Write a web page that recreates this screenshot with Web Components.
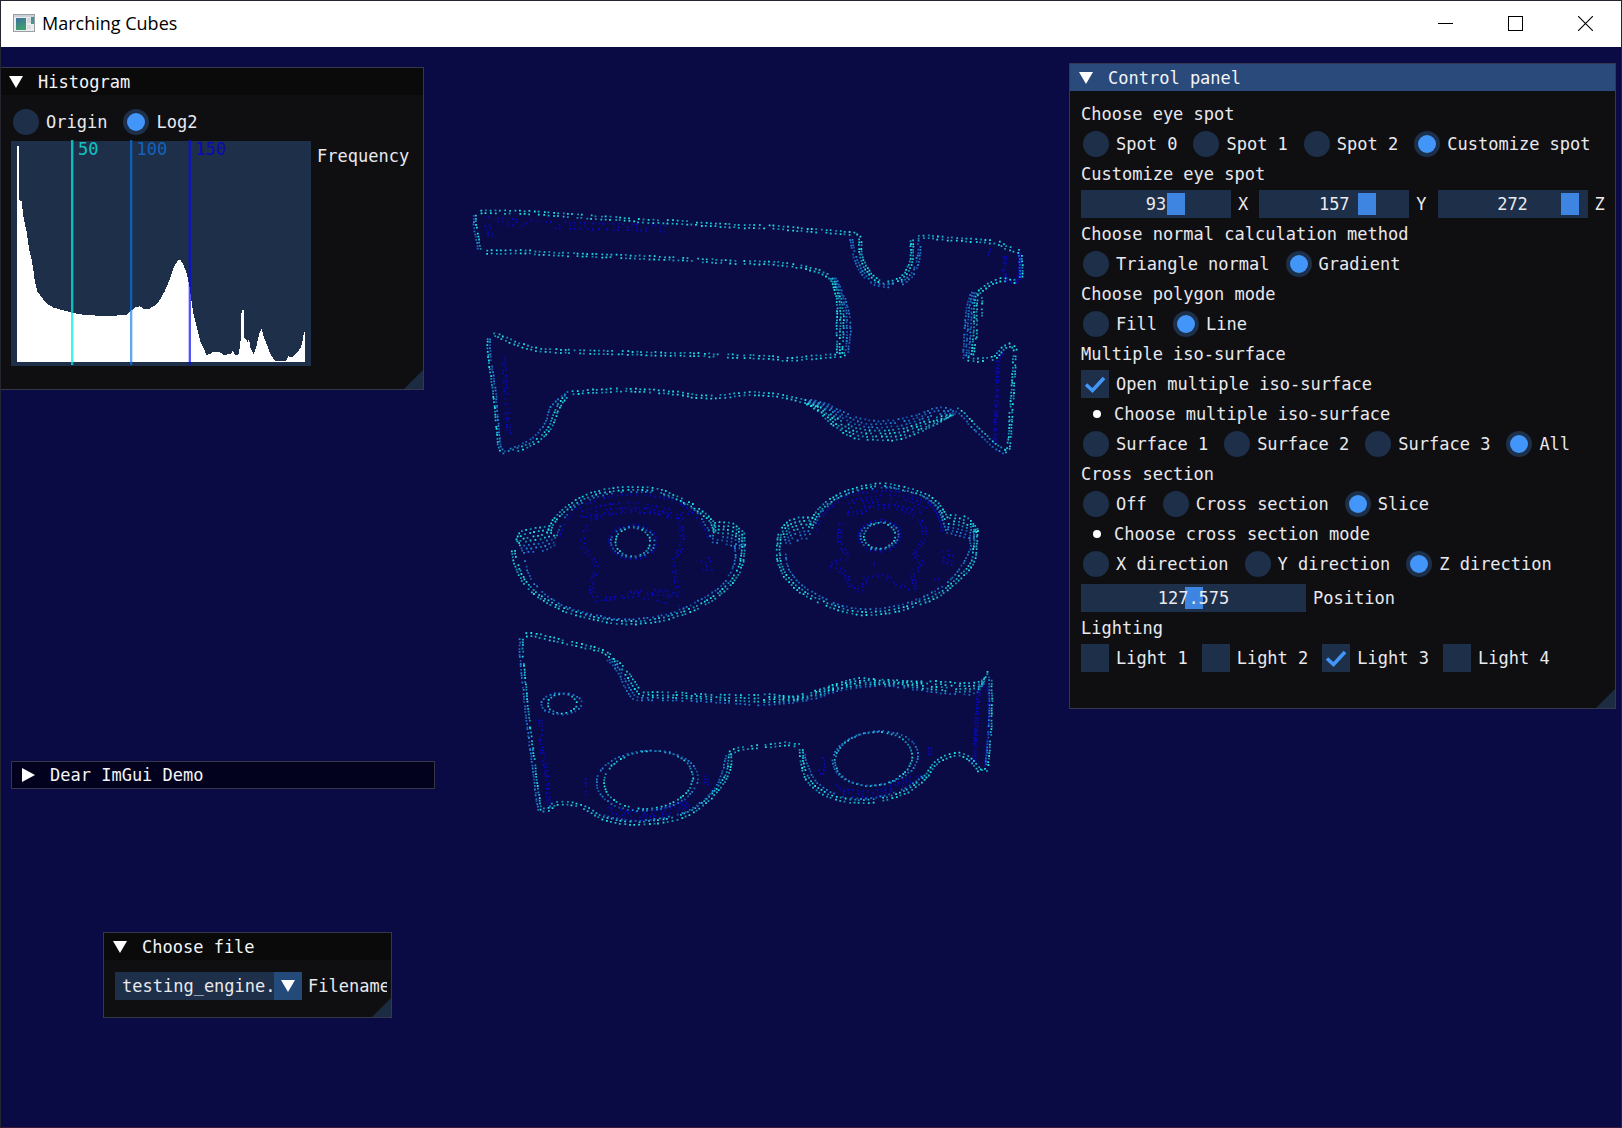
<!DOCTYPE html>
<html lang="en">
<head>
<meta charset="utf-8">
<title>Marching Cubes</title>
<style>
html, body { height: 100%; margin: 0; }
body { background: #0a0a44; overflow: hidden; }
</style>
</head>
<body>
<app-frame caption="Marching Cubes">
  <point-cloud></point-cloud>
  <im-window caption="Histogram" class="histogram">
    <im-choices kind="radio" name="scale" options="Origin|Log2" checked="1"></im-choices>
    <im-histogram label="Frequency"></im-histogram>
  </im-window>
  <im-window caption="Dear ImGui Demo" class="demo" collapsed></im-window>
  <im-window caption="Choose file" class="file">
    <im-combo label="Filename" value="testing_engine."></im-combo>
  </im-window>
  <im-window caption="Control panel" class="control" active>
    <im-text>Choose eye spot</im-text>
    <im-choices kind="radio" name="spot" options="Spot 0|Spot 1|Spot 2|Customize spot" checked="3"></im-choices>
    <im-text>Customize eye spot</im-text>
    <im-row>
      <im-slider label="X" value="93" min="-300" max="300"></im-slider>
      <im-slider label="Y" value="157" min="-300" max="300"></im-slider>
      <im-slider label="Z" value="272" min="-300" max="300"></im-slider>
    </im-row>
    <im-text>Choose normal calculation method</im-text>
    <im-choices kind="radio" name="normal" options="Triangle normal|Gradient" checked="1"></im-choices>
    <im-text>Choose polygon mode</im-text>
    <im-choices kind="radio" name="polygon" options="Fill|Line" checked="1"></im-choices>
    <im-text>Multiple iso-surface</im-text>
    <im-choices kind="checkbox" name="multi" options="Open multiple iso-surface" checked="0"></im-choices>
    <im-text bullet>Choose multiple iso-surface</im-text>
    <im-choices kind="radio" name="surface" options="Surface 1|Surface 2|Surface 3|All" checked="3"></im-choices>
    <im-text>Cross section</im-text>
    <im-choices kind="radio" name="section" options="Off|Cross section|Slice" checked="2"></im-choices>
    <im-text bullet>Choose cross section mode</im-text>
    <im-choices kind="radio" name="direction" options="X direction|Y direction|Z direction" checked="2"></im-choices>
    <im-row spaced>
      <im-slider wide label="Position" value="127.575" min="0" max="255"></im-slider>
    </im-row>
    <im-text>Lighting</im-text>
    <im-choices kind="checkbox" name="light" options="Light 1|Light 2|Light 3|Light 4" checked="2"></im-choices>
  </im-window>
</app-frame>

<script>
function define(name, render) {
  customElements.define(name, class extends HTMLElement {
    connectedCallback() {
      if (this.shadowRoot) return;
      const root = this.attachShadow({ mode: 'open' });
      root.innerHTML = render(this);
    }
  });
}

define('app-frame', el => `
<style>
  :host { display: flex; flex-direction: column; height: 100vh; box-sizing: border-box;
    border: 1px solid #25252f; border-bottom-color: #3a1a3a; }
  header { display: flex; align-items: center; height: 46px; flex: none; background: #fff; color: #000;
    font: 18px/24px "Open Sans", "Noto Sans", sans-serif; }
  .icon { margin: 0 7px 2px 12px; }
  h1 { flex: 1; margin: 0; padding-bottom: 2px; font: inherit; }
  button { width: 70px; height: 46px; padding: 0 1px 2px 0; border: 0; background: none; display: grid; place-items: center; }
  svg { display: block; }
  main { flex: 1; position: relative; overflow: hidden; min-height: 0; background: #0a0a44;
    font: 17px/30px "DejaVu Sans Mono", "Liberation Mono", monospace; color: #e9e9ee; }
  ::slotted(im-window) { position: absolute; }
  ::slotted(.histogram) { left: -2px; top: 20px; width: 425px; height: 323px; --body-top: 12px; }
  ::slotted(.demo) { left: 10px; top: 714px; width: 424px; }
  ::slotted(.file) { left: 102px; top: 885px; width: 289px; height: 86px; --body-top: 12px; }
  ::slotted(.control) { right: 5px; top: 16px; width: 547px; padding-bottom: 35px; }
</style>
<header>
  <svg class="icon" width="22" height="18" viewBox="0 0 22 18">
    <defs><linearGradient id="g" x1="0" y1="0" x2="0.4" y2="1"><stop offset="0" stop-color="#3f6f9f"/><stop offset="1" stop-color="#3f9f6c"/></linearGradient></defs>
    <rect x=".5" y=".5" width="21" height="17" fill="#e9edee" stroke="#9aa0a4"/>
    <rect x="1" y="1" width="20" height="2" fill="#c9d2d8"/>
    <rect x="3" y="4" width="10" height="12" fill="url(#g)"/>
    <rect x="14" y="4" width="4" height="5" fill="#d4d9dc"/><rect x="14" y="11" width="4" height="4" fill="#d9dddf"/>
    <rect x="18" y="3" width="3" height="7" fill="#4d8f94"/>
  </svg>
  <h1>${el.getAttribute('caption')}</h1>
  <button aria-label="Minimize"><svg width="15" height="15"><path d="M0 7.5H15" stroke="#000"/></svg></button>
  <button aria-label="Maximize"><svg width="15" height="15"><rect x=".5" y=".5" width="14" height="14" fill="none" stroke="#000"/></svg></button>
  <button aria-label="Close"><svg width="15" height="15"><path d="M0 0L15 15M15 0L0 15" stroke="#000" stroke-width="1.1"/></svg></button>
</header>
<main><slot></slot></main>`);

define('im-window', el => {
  const closed = el.hasAttribute('collapsed');
  return `
<style>
  :host { display: flex; flex-direction: column; box-sizing: border-box; overflow: hidden;
    border: 1px solid #37374a; background: ${closed ? '#02021e' : '#0f0f12'}; }
  header { display: flex; align-items: center; gap: 15px; flex: none; height: ${closed ? 26 : 27}px; padding-left: 9px;
    background: ${closed ? '#02021e' : el.hasAttribute('active') ? '#294a7a' : '#0a0a0b'}; }
  h2 { margin: 0; font: inherit; line-height: 26px; color: #f4f4f6; }
  button { width: 14px; height: 26px; padding: 0; border: 0; background: none; display: grid; place-items: center; }
  .body { padding: var(--body-top, 8px) 4px 0 11px; display: flex; flex-direction: column; }
  .grip { position: absolute; right: 0; bottom: 0; display: block; }
</style>
<header>
  <button aria-label="Toggle window"><svg width="14" height="14"><path d="${closed ? 'M1 0L14 7L1 14Z' : 'M0 1H14L7 13Z'}" fill="#fff"/></svg></button>
  <h2>${el.getAttribute('caption')}</h2>
</header>
${closed ? '' : `<div class="body"><slot></slot></div>
<svg class="grip" width="19" height="19"><path d="M19 0V19H0Z" fill="#1b2c42"/></svg>`}`;
});

define('im-text', el => `
<style>
  :host { display: flex; align-items: center; height: 30px; white-space: pre; }
  i { width: 8px; height: 8px; border-radius: 50%; background: #fff; margin: 0 13px 0 12px; }
</style>${el.hasAttribute('bullet') ? '<i></i>' : ''}<span><slot></slot></span>`);

define('im-row', el => `
<style>
  :host { display: flex; align-items: center; gap: 11px; height: 30px; margin-top: ${el.hasAttribute('spaced') ? 4 : 0}px; }
</style><slot></slot>`);

define('im-choices', el => {
  const kind = el.getAttribute('kind'), name = el.getAttribute('name'), on = +el.getAttribute('checked');
  return `
<style>
  :host { display: flex; gap: 14px; height: 30px; align-items: center; }
  label { display: flex; align-items: center; gap: 7px; white-space: pre; }
  input { appearance: none; flex: none; box-sizing: border-box; width: 28px; height: 28px; margin: 0; display: grid; place-items: center; background: #1d2f49; }
  input[type=radio] { width: 26px; height: 26px; margin: 0 0 0 2px; border-radius: 50%; }
  input[type=radio]:checked::before { content: ""; width: 18px; height: 18px; border-radius: 50%; background: #4296fa; }
  .box { display: grid; }
  .box > * { grid-area: 1 / 1; }
  .box svg { visibility: hidden; pointer-events: none; }
  input:checked + svg { visibility: visible; }
</style>
${el.getAttribute('options').split('|').map((text, i) => `<label for="${name}${i}"><span class="box"><input type="${kind}" name="${name}" id="${name}${i}"${i === on ? ' checked' : ''}>${kind === 'checkbox' ? '<svg width="28" height="28"><path d="M5 14.500L11.500 20.500L23 8" fill="none" stroke="#4296fa" stroke-width="3.600"/></svg>' : ''}</span><span>${text}</span></label>`).join('')}`;
});

define('im-slider', el => {
  const v = el.getAttribute('value');
  return `
<style>
  :host { display: flex; align-items: center; gap: 7px; }
  .track { display: grid; width: ${el.hasAttribute('wide') ? 225 : 150}px; height: 28px; background: #1d2f49; }
  .track > * { grid-area: 1 / 1; }
  input { appearance: none; width: auto; min-width: 0; margin: 3px; background: none; height: 22px; }
  input::-webkit-slider-thumb { appearance: none; width: 18px; height: 22px; background: #3d85e0; }
  input::-moz-range-thumb { width: 18px; height: 22px; border: 0; border-radius: 0; background: #3d85e0; }
  output { text-align: center; line-height: 28px; pointer-events: none; z-index: 1; }
</style>
<span class="track"><input id="s" type="range" min="${el.getAttribute('min')}" max="${el.getAttribute('max')}" step="any" value="${v}"><output for="s">${v}</output></span>
<label for="s">${el.getAttribute('label')}</label>`;
});

define('im-combo', el => `
<style>
  :host { display: flex; align-items: center; gap: 6px; height: 28px; overflow: hidden; white-space: pre; }
  .box { display: grid; flex: none; width: 187px; height: 28px; align-items: center; }
  .box > * { grid-area: 1 / 1; }
  select { appearance: none; width: 187px; height: 28px; box-sizing: border-box; margin: 0; padding: 0 28px 0 7px; border: 0; border-radius: 0;
    font: inherit; line-height: 28px; color: inherit; background: linear-gradient(90deg, #1d2f49 159px, #234a78 159px); }
  svg { justify-self: end; margin-right: 7px; pointer-events: none; }
</style>
<span class="box"><select id="f"><option>${el.getAttribute('value')}</option></select>
<svg width="14" height="14"><path d="M0 1H14L7 13Z" fill="#fff"/></svg></span>
<label for="f">${el.getAttribute('label')}</label>`);

/* Envelope of the log2 histogram: x from the left of the plot, y from its top, in thirds of a pixel. */
const envelope = [18,14, 22,14, 23,176, 31,182, 34,215, 40,250, 46,275, 52,320, 60,355, 66,390, 70,422, 78,452, 90,468, 106,488,
  126,500, 156,508, 184,516, 220,522, 280,525, 310,524, 345,521, 360,508, 372,498, 386,496, 396,504, 412,504, 432,492, 446,476,
  460,450, 476,412, 486,380, 498,360, 505,356, 512,364, 524,392, 533,430, 540,480, 546,520, 556,560, 566,600, 576,620, 584,642,
  598,638, 606,632, 624,632, 634,641, 658,640, 664,628, 670,642, 682,640, 687,600, 689,520, 694,504, 698,512, 699,590, 708,602,
  712,594, 717,620, 726,640, 734,620, 740,590, 746,570, 751,564, 756,585, 766,610, 774,632, 782,648, 792,660, 824,660, 830,646,
  842,650, 856,636, 868,620, 875,590, 877,572, 882,572];

define('im-histogram', el => {
  let d = '';
  for (let x = 18; x < 881; x += 3) {
    let i = 0;
    while (i < envelope.length - 4 && envelope[i + 2] < x) i += 2;
    const t = (x - envelope[i]) / (envelope[i + 2] - envelope[i]);
    const y = envelope[i + 1] + (envelope[i + 3] - envelope[i + 1]) * Math.max(0, Math.min(1, t));
    d += `${d ? 'L' : 'M18 662L'}${x} ${Math.round(y / 3) * 3}H${x + 3}`;
  }
  const mark = (x, c, o) => `<rect x="${x}" y="-3" width="7" height="675" fill="${c}" opacity="${o}"/>`;
  return `
<style>
  :host { display: flex; gap: 6px; margin-top: 4px; align-items: flex-start; }
  .plot { display: grid; width: 300px; height: 225px; background: #1d2f49; }
  .plot > * { grid-area: 1 / 1; }
  svg { display: block; overflow: visible; }
  .marks { display: flex; gap: 38px; padding-left: 67px; line-height: 16px; }
  .marks span:nth-child(1) { color: #10c4c4; }
  .marks span:nth-child(2) { color: #1263bd; }
  .marks span:nth-child(3) { color: #0a0ab8; margin-left: -10px; }
</style>
<div class="plot">
<svg width="300" height="225" viewBox="0 0 900 675"><path d="${d}V662Z" fill="#fff" shape-rendering="crispEdges"/>
${mark(180, '#00f0e8', .75)}${mark(357, '#0a78f0', .65)}${mark(533, '#0a0af0', .7)}</svg>
<div class="marks"><span>50</span><span>100</span><span>150</span></div></div>
<span>${el.getAttribute('label')}</span>`;
});

/* Slices of the scanned model as dotted contours. Each patch has an origin in scene
   pixels; its contours are listed in thirds of a pixel relative to that origin. */
let seed = 7;
const rnd = () => (seed = (seed * 16807) % 2147483647) / 2147483647;
const buckets = {};
function dot(x, y, tone) {
  const key = tone + Math.floor(rnd() * 3);
  (buckets[key] = buckets[key] || []).push(`M${(x - 1.4).toFixed(1)} ${(y - 1.6).toFixed(1)}h1.8v1.8h-1.8z`);
}
function smooth(p) {
  const out = [];
  for (let i = 0; i < p.length - 1; i++) {
    const a = p[i - 1] || p[i], b = p[i], c = p[i + 1], e = p[i + 2] || c;
    for (let k = 0; k < 24; k++) {
      const t = k / 24, f = j => 0.5 * (2 * b[j] + (c[j] - a[j]) * t + (2 * a[j] - 5 * b[j] + 4 * c[j] - e[j]) * t * t + (3 * b[j] - a[j] - 3 * c[j] + e[j]) * t * t * t);
      out.push([f(0), f(1)]);
    }
  }
  out.push(p[p.length - 1]);
  return out;
}
function pairs(s) { return s.trim().split(/\s+/).map(q => q.split(',').map(Number)); }
function walk(pts, tone, shift, keep) {
  let acc = 0;
  for (let i = 1; i < pts.length; i++) {
    const dx = pts[i][0] - pts[i - 1][0], dy = pts[i][1] - pts[i - 1][1];
    acc += Math.hypot(dx / 4.8, dy / 3);
    if (acc >= 1) {
      acc -= 1;
      const l = Math.hypot(dx, dy) || 1;
      if (rnd() < keep) dot(pts[i][0] - dy / l * shift + (rnd() - .5) * .8, pts[i][1] + dx / l * shift + (rnd() - .5) * .8, tone);
    }
  }
}
function patch(ox, oy) {
  const px = s => smooth(pairs(s).map(([x, y]) => [ox + x / 3, oy + y / 3]));
  return {
    line(s, tones = 'cc', gap = 3, keep = .96) {
      [...tones].forEach((t, i) => walk(px(s), t, (i - (tones.length - 1) / 2) * gap, keep));
    },
    band(a, b, tones, keep = .93) {
      const A = px(a), B = px(b);
      [...tones].forEach((t, i) => {
        const k = i / (tones.length - 1);
        walk(A.map((p, j) => [p[0] + (B[j][0] - p[0]) * k, p[1] + (B[j][1] - p[1]) * k]), t, 0, keep);
      });
    },
    ring(cx, cy, rx, ry, tones, gap = 3, tilt = 0) {
      const pts = [];
      for (let i = 0; i <= 360; i++) {
        const a = i * Math.PI / 180, x = Math.cos(a) * rx, y = Math.sin(a) * ry;
        pts.push([ox + (cx + x * Math.cos(tilt) - y * Math.sin(tilt)) / 3, oy + (cy + x * Math.sin(tilt) + y * Math.cos(tilt)) / 3]);
      }
      [...tones].forEach((t, i) => walk(pts, t, -i * gap, .97));
    }
  };
}

const a = patch(460, 190);
a.line('50,70 90,68 200,70 300,76 400,84 500,90 560,96 650,98 720,104 800,109 840,111');
a.line('46,70 47,110 54,150 60,184', 'cb', 2.500);
a.line('66,188 130,188 200,188 260,193 350,197 450,200 560,205 680,210 780,217 840,220');
a.line('92,440 110,436 130,446 180,466 240,482 350,487 500,491 600,494 700,496 800,500 840,502');
a.line('88,440 88,480 95,540 105,610 112,690 120,770 135,790', 'bc', 2.500);
a.line('135,792 180,779 230,756 270,716 300,646 325,618');
a.line('140,782 180,768 220,744 255,704 275,650 325,608', 'b');
a.line('325,612 400,606 500,602 580,606 650,612 720,622 790,622 840,615');
a.line('70,92 150,98 300,108 450,112 600,118 635,122', 'ddd', 3, .55);
a.line('80,100 98,150', 'dd', 4, .6);
a.line('130,488 136,560 142,660 150,740', 'dd', 3, .6);

const b = patch(740, 200);
b.line('0,82 70,82 150,88 250,96 330,102');
b.line('330,102 345,99 362,112', 'c');
b.line('362,110 365,170 385,215 410,240 440,250 480,240 505,212 517,175 517,122', 'cc', 2.500);
b.line('335,110 342,160 365,215 400,250 440,260 490,250 525,215 538,165 540,118', 'bb', 2.500, .85);
b.line('522,114 570,113 640,120 720,124 780,132 800,145 842,158');
b.line('842,160 845,200 844,238', 'cb', 2.500);
b.line('840,244 815,246 780,242 740,262 712,285');
b.line('798,162 797,236 838,240 840,160', 'dd', 2);
b.line('0,188 100,192 170,200 225,212 262,228');
b.band('265,228 285,270 293,320 292,380 292,460', '285,228 310,280 328,340 333,400 325,462', 'cccbb');
b.line('0,472 80,474 150,480 220,474 300,468 325,460');
b.line('0,585 50,583 110,588 160,598 200,608 240,618');
b.band('200,600 250,610 310,637 380,662 450,664 520,650 600,624 650,640', '190,610 230,632 290,685 350,718 420,722 480,720 560,690 640,648', 'bbbcccc');
b.line('640,628 665,640 700,678 740,716 770,742 795,757', 'cb', 4);
b.line('826,460 822,540 815,640 808,740 795,757', 'cc', 2.500);
b.band('700,270 683,320 675,400 672,478', '718,275 712,320 712,400 702,466', 'bbbcc');
b.line('728,285 728,355', 'c');
b.line('672,478 720,482 765,475 790,448 815,438 828,455');
b.line('800,455 778,480 772,600 765,735', 'dd', 2);
b.line('735,155 755,160', 'ddd', 3);

const c = patch(500, 470);
c.line('145,200 160,160 200,118 260,82 330,62 400,58 470,62 530,85 580,110 635,155 645,190');
c.line('175,210 190,165 225,120 280,92 340,76 400,72 470,76 530,95 580,125 615,170 630,205', 'bd', 3, .8);
c.band('48,220 62,190 100,178 155,170', '60,255 85,248 125,245 175,225', 'ccccbbb');
c.band('630,160 670,160 705,165 735,195', '625,215 655,222 690,228 732,240', 'ccccbbb');
c.line('40,235 50,285 80,345 140,395 220,430 300,450 380,460 460,455 540,435 620,400 690,345 726,280 732,200');
c.line('75,265 90,320 130,370 200,412 300,440 380,450 500,436 600,393 670,345 705,280 705,225', 'b');
c.ring(400, 218, 52, 43, 'c');
c.ring(400, 218, 66, 46, 'bd', 2);
c.line('230,135 300,140 360,122 430,120 490,135 540,160 545,230 520,280 535,370 500,372 400,378 300,388 275,350 290,290 250,230 260,180 300,135', 'dd', 3, .7);
c.band('235,130 330,105 430,103 565,135', '235,145 330,135 430,130 560,150', 'ddd', .6);
c.band('380,370 460,362 540,368', '230,405 400,385 540,410', 'ddd', .55);
c.band('590,280 640,262', '595,305 640,300', 'dddd', .7);

const e = patch(760, 470);
e.line('150,185 165,145 200,103 260,70 320,52 380,47 440,60 500,80 540,112 560,150');
e.line('165,190 185,140 230,95 290,70 380,60 440,70 500,92 535,130 555,185', 'bd', 3, .8);
e.band('62,185 85,158 120,145 160,145', '75,238 95,220 125,210 155,205', 'ccccbbb');
e.band('558,140 600,138 630,150 655,180', '550,185 590,198 620,205 650,210', 'ccccbbb');
e.line('62,185 57,260 75,315 120,362 180,395 250,422 320,433 400,425 470,405 540,375 600,325 640,275 650,185');
e.line('78,245 88,300 130,350 200,390 260,412 320,420 400,412 480,388 550,350 600,300 632,240 630,205', 'b');
e.ring(360, 200, 47, 38, 'c', 3, -.1);
e.ring(360, 200, 58, 41, 'bd', 2, -.1);
e.line('250,130 290,132 340,115 400,112 450,130 490,165 490,215 465,250 490,290 460,310 465,355 430,352 380,325 325,320 310,360 275,355 255,310 200,290 260,265 240,215 245,160', 'dd', 3, .75);
e.band('250,100 330,82 420,80 500,105', '260,120 330,110 420,110 500,135', 'dddd', .6);
e.band('535,248 585,245', '540,270 580,290', 'dddd', .8);
e.line('330,285 352,288', 'dd', 3);
e.line('510,335 550,325', 'd', 3);

const f = patch(500, 620);
f.line('66,48 100,46 160,60 240,78 300,92 335,112');
f.line('66,50 66,110 75,200 85,300 100,420 110,500 120,572', 'cb', 3);
f.band('335,110 370,140 400,180 425,215 440,222', '315,115 350,150 375,200 400,238 440,244', 'ccbb');
f.band('430,220 540,220 640,227 780,226', '430,242 540,244 640,248 780,258', 'cccb');
f.ring(188, 253, 43, 29, 'c', 3, -.03);
f.ring(186, 253, 61, 32, 'b', 3, -.03);
f.ring(447, 482, 134, 86, 'c', 3, -.1);
f.ring(443, 484, 152, 90, 'b', 3, -.08);
f.line('118,572 150,570 165,554 210,552 260,568 310,596 380,611 450,610 540,594 600,562 650,515 685,460 692,405');
f.line('300,582 370,602 450,602 540,584 590,560 640,515 668,460 680,405', 'b');
f.line('680,405 710,392 745,384 780,382');
f.band('310,560 380,575 450,578 560,545', '330,590 400,600 460,598 580,560', 'dddd', .7);
f.line('122,290 128,400 140,450 148,560', 'dd', 2.500, .7);
f.line('620,460 622,500', 'dd', 3, .7);
f.line('258,470 258,530', 'd', 3, .7);

const g = patch(750, 620);
g.band('30,226 60,225 130,230 200,212 260,195 320,178 400,180 480,186 560,186 640,192 695,185 715,155', '30,258 60,256 130,250 200,236 260,216 320,206 400,200 480,208 560,220 640,226 680,220 705,190', 'ccccb');
g.line('722,165 724,250 720,350 712,440', 'cb', 2.500);
g.line('712,190 690,205 685,260 678,350 675,435', 'dd', 2);
g.line('712,195 718,300 705,440', 'd', 2);
g.line('34,381 60,379 110,374 150,380');
g.line('155,380 158,430 175,480 215,518 270,540 340,547 410,538 480,512 530,470 560,430 610,406 650,412 680,440 695,458 712,450');
g.line('165,395 172,430 195,480 230,510 280,532 340,538 400,530 470,505 520,470', 'b');
g.ring(372, 419, 116, 80, 'c', 3, -.12);
g.ring(378, 417, 129, 80, 'b', 3, -.12);
g.band('250,490 300,512 400,508 500,465', '270,520 320,532 400,525 520,470', 'ddd', .75);
g.line('542,378 542,412', 'dd', 3);
g.line('250,370 262,372', 'dd', 3);
g.line('205,418 225,422 220,465 208,450', 'd', 3);

define('point-cloud', () => {
  const tone = { c: ['#1fe0e4', '#1abdd2', '#1593b4'], b: ['#2086dc', '#1b6dc4', '#1658ac'], d: ['#0808cc', '#0808b0', '#090992'] };
  return `
<style>
  :host { position: absolute; inset: 0; display: block; }
  svg { display: block; width: 100%; height: 100%; }
</style>
<svg viewBox="1 47 1620 1080" preserveAspectRatio="xMidYMid meet" role="img" aria-label="Sliced model">
${Object.keys(buckets).sort().reverse().map(k => `<path fill="${tone[k[0]][k[1]]}" d="${buckets[k].join('')}"/>`).join('')}
</svg>`;
});
</script>
</body>
</html>
